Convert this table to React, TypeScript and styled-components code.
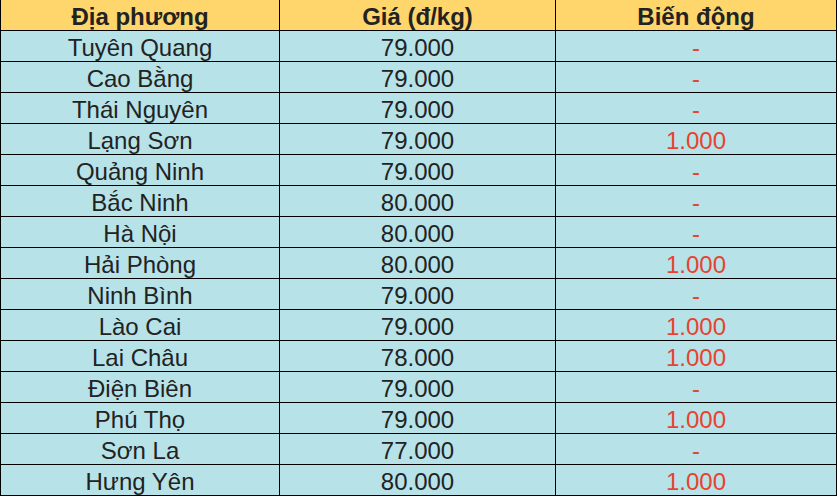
import React from 'react';
import styled, { createGlobalStyle } from 'styled-components';

const GlobalStyle = createGlobalStyle`
  html, body {
    margin: 0;
    padding: 0;
    background: #ffffff;
  }
`;

const Table = styled.table`
  width: 836px;
  border-collapse: collapse;
  table-layout: fixed;
  font-family: "Liberation Sans", Arial, sans-serif;
  font-size: 24px;
  color: #222222;
`;

const HeadCell = styled.th`
  height: 27px;
  padding: 3px 0 0;
  background: #fed66b;
  border: 1px solid #000;
  border-top: none;
  font-weight: bold;
  text-align: center;
  line-height: 27px;
`;

const Cell = styled.td<{ $red?: boolean }>`
  height: 27px;
  padding: 3px 0 0;
  background: #b6e2e8;
  border: 1px solid #000;
  text-align: center;
  line-height: 27px;
  color: ${(p) => (p.$red ? '#e8432f' : '#222222')};
`;

const rows: [string, string, string][] = [
  ['Tuyên Quang', '79.000', '-'],
  ['Cao Bằng', '79.000', '-'],
  ['Thái Nguyên', '79.000', '-'],
  ['Lạng Sơn', '79.000', '1.000'],
  ['Quảng Ninh', '79.000', '-'],
  ['Bắc Ninh', '80.000', '-'],
  ['Hà Nội', '80.000', '-'],
  ['Hải Phòng', '80.000', '1.000'],
  ['Ninh Bình', '79.000', '-'],
  ['Lào Cai', '79.000', '1.000'],
  ['Lai Châu', '78.000', '1.000'],
  ['Điện Biên', '79.000', '-'],
  ['Phú Thọ', '79.000', '1.000'],
  ['Sơn La', '77.000', '-'],
  ['Hưng Yên', '80.000', '1.000'],
];

export default function App() {
  return (
    <>
      <GlobalStyle />
      <Table>
        <colgroup>
          <col style={{ width: 279 }} />
          <col style={{ width: 276 }} />
          <col style={{ width: 281 }} />
        </colgroup>
        <thead>
          <tr>
            <HeadCell>Địa phương</HeadCell>
            <HeadCell>Giá (đ/kg)</HeadCell>
            <HeadCell>Biến động</HeadCell>
          </tr>
        </thead>
        <tbody>
          {rows.map(([place, price, change]) => (
            <tr key={place}>
              <Cell>{place}</Cell>
              <Cell>{price}</Cell>
              <Cell $red>{change}</Cell>
            </tr>
          ))}
        </tbody>
      </Table>
    </>
  );
}
